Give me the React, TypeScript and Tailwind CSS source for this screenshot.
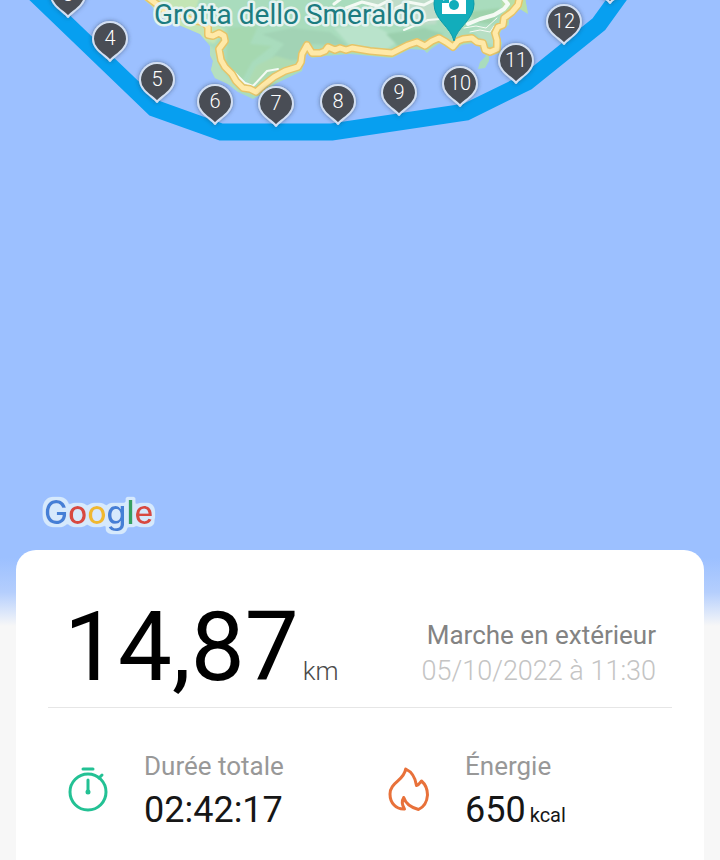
const markers = [
  { label: "3", x: 68, y: 17 },
  { label: "4", x: 110, y: 61 },
  { label: "5", x: 157, y: 102 },
  { label: "6", x: 215, y: 124 },
  { label: "7", x: 276, y: 126 },
  { label: "8", x: 338, y: 124 },
  { label: "9", x: 399, y: 115 },
  { label: "10", x: 460, y: 106 },
  { label: "11", x: 516, y: 83 },
  { label: "12", x: 564, y: 44 },
  { label: "", x: 610, y: 3 },
];

const coastRoad =
  "M146 -4 L158 5 L166 12 L178 14 L190 20 L203 22 L208 27 L208 35 L213 36 L219 33 L224 36 L225 41 L219 49 L221 60 L225 67 L232 74 L236 81 L243 88 L250 89 L256 92 L264 85 L274 77 L285 71 L298 67 L301 62 L302 54 L307 45 L312 53 L320 53 L325 51 L328 47 L335 50 L340 48 L346 50 L352 48 L370 51 L392 53 L400 49 L408 45 L417 42 L425 46 L432 41 L439 38 L446 42 L453 47 L458 41 L463 39 L472 38 L477 42 L483 43 L485 50 L490 52 L497 49 L497 40 L495 33 L498 27 L503 25 L504 18 L512 12 L518 5 L520 -4";

/* Kilometre marker, tip at (x, y) */
function Marker({ label, x, y }: { label: string; x: number; y: number }) {
  return (
    <g transform={`translate(${x} ${y})`}>
      <path
        d="M0 0 C-3 -5 -17 -11 -17 -22 A17 17 0 1 1 17 -22 C17 -11 3 -5 0 0 Z"
        fill="#484e54"
        stroke="#d3dff2"
        strokeWidth="2"
        strokeLinejoin="round"
        filter="url(#marker-shadow)"
      />
      {label && (
        <text
          y="-16"
          textAnchor="middle"
          fill="#ffffff"
          className="font-['Roboto',sans-serif] text-[20px] font-light"
        >
          {label}
        </text>
      )}
    </g>
  );
}

function RouteMap() {
  return (
    <svg viewBox="0 0 720 160" className="block w-full" role="img" aria-label="Parcours">
      <defs>
        <filter id="marker-shadow" x="-30%" y="-30%" width="160%" height="160%">
          <feDropShadow dx="0" dy="0" stdDeviation="2" floodColor="#28344a" floodOpacity="0.55" />
        </filter>
        <filter id="soft" x="-5%" y="-20%" width="110%" height="140%">
          <feGaussianBlur stdDeviation="1" />
        </filter>
        <clipPath id="land">
          <path d="M142 -2 L152 6 L158 16 L172 22 L186 28 L200 34 L210 46 L210 55 L213 61 L211 70 L215 78 L228 84 L238 92 L253 99 L262 94 L275 84 L302 71 L304 58 L308 53 L312 58 L325 56 L350 54 L392 58 L410 49 L424 50 L427 53 L431 49 L440 43 L453 51 L462 45 L474 43 L481 48 L486 56 L480 62 L478 69 L485 68 L489 61 L489 56 L500 53 L502 43 L499 36 L502 29 L509 25 L509 18 L520 9 L528 14 L525 -2 Z" />
        </clipPath>
      </defs>

      {/* Land relief */}
      <g clipPath="url(#land)">
        <rect x="130" y="-4" width="410" height="110" fill="#a9dcbd" />
        <g filter="url(#soft)">
          <path d="M130 -4 H200 L196 10 L225 30 L214 44 L170 28 Z" fill="#c3e5b5" />
          <path d="M208 44 L218 52 L221 68 L240 92 L230 92 L208 76 Z" fill="#b5dfc0" />
          <path d="M228 28 L258 26 L250 44 L272 46 L252 62 L240 84 L226 66 Z" fill="#a5d8b0" />
          <path d="M262 34 L292 28 L330 32 L348 46 L312 44 L300 60 L270 60 L284 44 Z" fill="#a2d3b5" />
          <path d="M256 66 L276 56 L298 62 L262 84 L246 86 Z" fill="#aedbb2" />
          <path d="M334 28 L372 24 L400 40 L386 50 L350 46 Z" fill="#b9e3cb" />
          <path d="M356 -4 L440 -4 L436 24 L402 26 L380 12 Z" fill="#bfdcc9" />
          <path d="M386 34 L424 28 L444 34 L428 40 L400 48 Z" fill="#9bd0ae" />
          <path d="M468 12 L500 8 L492 24 L476 22 Z" fill="#9ed2ab" />
          <path d="M472 30 L496 24 L494 46 L482 40 Z" fill="#b7dfc4" />
          <path d="M502 -4 H530 V14 L516 10 L502 28 Z" fill="#b9dfa7" />
        </g>
        <g fill="none" stroke="#f4faf4" strokeLinejoin="round" strokeLinecap="round">
          <path d="M334 4 L342 -2 M346 8 L362 2 L378 6 L390 0 M396 8 L408 2 L424 5 L436 -1" strokeWidth="3" />
          <path d="M440 19 L428 20 L418 24 L404 30" strokeWidth="2" />
          <path d="M468 24 L480 19 L494 15 L504 9 L508 4 L502 -3" strokeWidth="4" />
          <path d="M464 28 L476 26 L486 28 L497 18 M470 32 L480 30 L490 32 L494 26" strokeWidth="1" />
          <path d="M234 72 L245 83 L253 86 L267 71 L278 69" strokeWidth="2" />
        </g>
      </g>

      {/* Coast road */}
      <g fill="none" strokeLinejoin="round" strokeLinecap="round">
        <path d={coastRoad} stroke="#e6c468" strokeWidth="8" />
        <path d={coastRoad} stroke="#ffe9a8" strokeWidth="5" />
      </g>

      {/* Place label and pin */}
      <text
        x="154"
        y="24"
        fill="#1c7c80"
        stroke="#e4f3f0"
        strokeWidth="5"
        strokeLinejoin="round"
        paintOrder="stroke"
        className="font-['Roboto',sans-serif] text-[28px]"
      >
        Grotta dello Smeraldo
      </text>
      <path
        d="M454 41 C451 27 434 20 434 4 A20 20 0 0 1 474 4 C474 20 457 27 454 41 Z"
        fill="#12adbb"
        stroke="#0d9aa8"
        strokeWidth="1"
      />
      <path d="M442 3 L449 3 L449 -4 H466 V14 H442 Z" fill="#ffffff" />
      <circle cx="454" cy="5" r="5" fill="#12adbb" />
      <path d="M443 0 L447 -3" stroke="#ffffff" strokeWidth="2" />

      {/* Track */}
      <path
        d="M26 -15 L154 108 L221 132 L332 132 L466 112 L527 82 L599 24 L625 -12"
        fill="none"
        stroke="#079ff0"
        strokeWidth="17"
      />
      {markers.map((m) => (
        <Marker key={m.x} {...m} />
      ))}
    </svg>
  );
}

function GoogleLogo() {
  return (
    <svg
      viewBox="0 0 124 52"
      className="absolute bottom-[88px] left-10 h-[52px] w-[124px]"
      role="img"
      aria-label="Google"
    >
      <defs>
        {/* Pale halo round the whole word */}
        <filter id="halo" x="-10%" y="-20%" width="120%" height="140%">
          <feMorphology in="SourceAlpha" operator="dilate" radius="3" result="wide" />
          <feGaussianBlur in="wide" stdDeviation="1" result="round" />
          <feComponentTransfer in="round" result="edge">
            <feFuncA type="linear" slope="3" intercept="-0.8" />
          </feComponentTransfer>
          <feFlood floodColor="#d6e9fc" />
          <feComposite in2="edge" operator="in" result="glow" />
          <feMerge>
            <feMergeNode in="glow" />
            <feMergeNode in="SourceGraphic" />
          </feMerge>
        </filter>
      </defs>
      <text
        x="4"
        y="38"
        filter="url(#halo)"
        className="font-['Inter',sans-serif] text-[32px] font-medium"
      >
        <tspan fill="#447fd6">G</tspan>
        <tspan fill="#d8483f">o</tspan>
        <tspan fill="#efb92f">o</tspan>
        <tspan fill="#447fd6">g</tspan>
        <tspan fill="#35a060">l</tspan>
        <tspan fill="#d8483f">e</tspan>
      </text>
    </svg>
  );
}

function StopwatchIcon() {
  return (
    <svg
      viewBox="0 0 48 48"
      className="size-12 shrink-0"
      fill="none"
      stroke="#23c194"
      strokeWidth="3"
      strokeLinecap="round"
      aria-hidden="true"
    >
      <circle cx="24" cy="26" r="18" />
      <path d="M19 3 H29 M24 14 V26 M35 12 L38 9" />
      <circle cx="24" cy="26" r="1" />
    </svg>
  );
}

function FlameIcon() {
  return (
    <svg
      viewBox="0 0 48 48"
      className="size-12 shrink-0"
      fill="none"
      stroke="#e8713a"
      strokeWidth="3"
      strokeLinecap="round"
      strokeLinejoin="round"
      aria-hidden="true"
    >
      <path d="M20.7 3 C25 5 30 9 31.5 19.5 C34 19 35 17 36.5 15 C40 18 42.5 23 42.5 29 C42 36 39 41 33.5 43.5 C28 42 21 39 18.7 31.5 C16.5 35 17 39 19.5 43 C11 43.5 5 37 5 28 C5 16 19 15 20.7 3 Z" />
    </svg>
  );
}

export default function App() {
  return (
    <main className="flex min-h-screen flex-col bg-[#f7f7f7] font-['Roboto',sans-serif]">
      {/* Map */}
      <section className="relative h-[626px] overflow-hidden bg-[#9cc0ff]">
        <RouteMap />
        <div className="absolute inset-x-0 bottom-0 h-[68px] bg-gradient-to-b from-[#9cc0ff] via-[#b4cefd] to-[#f7f7f7]" />
        <GoogleLogo />
      </section>

      {/* Summary card */}
      <section className="relative mx-4 -mt-[76px] grow rounded-t-[20px] bg-white pb-7">
        <header className="mx-8 flex items-end justify-between border-b border-[#e6e6e6] px-4 pt-[49px] pb-3">
          <p className="flex items-baseline gap-1 text-black">
            <span className="text-8xl leading-none">14,87</span>
            <span className="text-[26px] font-light text-[#4a4a4a]">km</span>
          </p>
          <div className="mb-1.5 text-right leading-9">
            <h1 className="text-[26px] text-[#838383]">Marche en extérieur</h1>
            <p className="text-[27px] font-light text-[#c4c4c4]">
              <time dateTime="2022-10-05T11:30">05/10/2022 à 11:30</time>
            </p>
          </div>
        </header>

        <dl className="grid grid-cols-2 pt-10 pr-3.5 pl-8">
          <div className="flex items-center gap-8 pl-4">
            <StopwatchIcon />
            <div>
              <dt className="text-[26px] leading-9 text-[#989898]">Durée totale</dt>
              <dd className="mt-1 text-4xl leading-[44px] text-[#161616]">02:42:17</dd>
            </div>
          </div>
          <div className="flex items-center gap-8 pl-4">
            <FlameIcon />
            <div>
              <dt className="text-[26px] leading-9 text-[#989898]">Énergie</dt>
              <dd className="mt-1 flex items-baseline gap-1 text-4xl leading-[44px] text-[#161616]">
                650
                <span className="text-xl">kcal</span>
              </dd>
            </div>
          </div>
        </dl>
      </section>
    </main>
  );
}
